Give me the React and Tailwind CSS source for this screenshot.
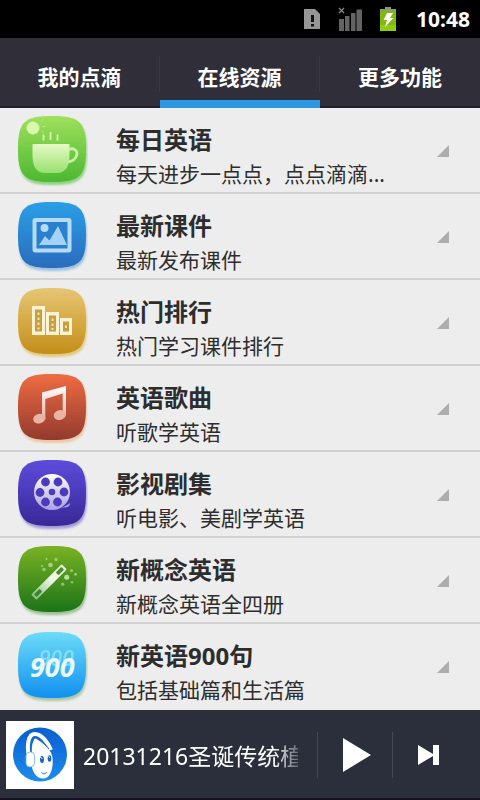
import { useState } from 'react';

const TABS = ['我的点滴', '在线资源', '更多功能'];

const SQUIRCLE =
  'M34 0 C62 0 68 6 68 33 C68 60 62 66 34 66 C6 66 0 60 0 33 C0 6 6 0 34 0 Z';

const IconTile = ({ id, from, to, shadow, children }) => (
  <svg viewBox="0 0 70 72" className="w-[70px] h-[72px] shrink-0" aria-hidden="true">
    <defs>
      <linearGradient id={`${id}-bg`} x1="0" y1="0" x2="0" y2="1">
        <stop offset="0" stopColor={from} />
        <stop offset="1" stopColor={to} />
      </linearGradient>
      <filter id={`${id}-blur`} x="-20%" y="-20%" width="140%" height="140%">
        <feGaussianBlur stdDeviation="1.2" />
      </filter>
    </defs>
    <path d={SQUIRCLE} fill={shadow} opacity="0.7" transform="translate(1 3)" filter={`url(#${id}-blur)`} />
    <path d={SQUIRCLE} fill={`url(#${id}-bg)`} />
    {children}
  </svg>
);

const CupIcon = () => (
  <IconTile id="cup" from="#a0e05c" to="#4cb832" shadow="#6cc455">
    <defs>
      <linearGradient id="cup-body" x1="0" y1="0" x2="0" y2="1">
        <stop offset="0" stopColor="#e6fbc4" />
        <stop offset="1" stopColor="#98e070" />
      </linearGradient>
    </defs>
    <path d="M15 3V1M23 6l2-3M24 11l4-1M23 15l3 2" stroke="#c6f08c" strokeWidth="1" opacity="0.6" />
    <circle cx="15" cy="12" r="6.5" fill="#d8f8b0" />
    <path d="M25.5 18.5v6M32.5 16v8M39.5 18.5v6" stroke="#dcf9b8" strokeWidth="1.8" />
    <path d="M50 34 C55 31 59 34 59 38 C58 43 54 46 48 46" fill="none" stroke="#c8f3a0" strokeWidth="2.8" />
    <path d="M14.5 28h37v12c0 11-5 17-12 17h-13c-7 0-12-6-12-17z" fill="url(#cup-body)" />
  </IconTile>
);

const PictureIcon = () => (
  <IconTile id="pic" from="#2a9fe6" to="#2a6cbe" shadow="#7fb0d8">
    <rect x="16.5" y="18" width="35" height="30.5" rx="1" fill="#2a80cc" stroke="#b4dcfa" strokeWidth="4" />
    <circle cx="26.5" cy="26" r="4" fill="#b4dcfa" />
    <path d="M21 43 L27 34 L31.5 38.5 L40 24 L49 43 Z" fill="#a4d2f8" />
  </IconTile>
);

const RankIcon = () => (
  <IconTile id="rank" from="#e6c674" to="#c48e18" shadow="#e0b850">
    <g fill="#fdf3d2">
      <rect x="14" y="18" width="13" height="29" />
      <rect x="28" y="24" width="13" height="23" />
      <rect x="42" y="30" width="12" height="17" />
    </g>
    <g fill="#c6a040">
      <rect x="17" y="21.5" width="7" height="22" />
      <rect x="31" y="27.5" width="7" height="16" />
      <rect x="45" y="33.5" width="6" height="10" />
    </g>
    <g fill="#f4e2b0">
      <rect x="19.5" y="24.5" width="2" height="2.5" />
      <rect x="19.5" y="29.5" width="2" height="2.5" />
      <rect x="19.5" y="34.5" width="2" height="2.5" />
      <rect x="19.5" y="39.5" width="2" height="2" />
      <rect x="33.5" y="30.5" width="2" height="2.5" />
      <rect x="33.5" y="35.5" width="2" height="2.5" />
      <rect x="33.5" y="40" width="2" height="2" />
      <rect x="47" y="37.5" width="2" height="2.5" />
    </g>
  </IconTile>
);

const MusicIcon = () => (
  <IconTile id="music" from="#f06c42" to="#923a2e" shadow="#e8b888">
    <defs>
      <linearGradient id="music-note" gradientUnits="userSpaceOnUse" x1="0" y1="12" x2="0" y2="50">
        <stop offset="0" stopColor="#fff" />
        <stop offset="1" stopColor="#e4a496" />
      </linearGradient>
    </defs>
    <path d="M24 18.5 L48 12 V41 H44.7 V19.5 L27.3 25 V45 H24 Z" fill="url(#music-note)" />
    <ellipse cx="21.3" cy="44.7" rx="6.2" ry="4.8" transform="rotate(-15 21.3 44.7)" fill="#e9b3a6" />
    <ellipse cx="41.8" cy="41" rx="6.2" ry="4.8" transform="rotate(-15 41.8 41)" fill="#e9b3a6" />
  </IconTile>
);

const REEL_HOLES = [[27.5, 22], [40, 22], [22, 32.5], [46, 32], [27.5, 42], [39.5, 42]];

const ReelIcon = () => (
  <IconTile id="reel" from="#5c4cdc" to="#382896" shadow="#8878d0">
    <defs>
      <linearGradient id="reel-disc" x1="0" y1="0" x2="0" y2="1">
        <stop offset="0" stopColor="#fff" />
        <stop offset="1" stopColor="#aaa0e4" />
      </linearGradient>
    </defs>
    <path d="M36 50 C43 49 48 46 52 43 C52 46 50 47.5 46 47.5 Z" fill="#aea4e6" />
    <circle cx="34" cy="32" r="18" fill="url(#reel-disc)" />
    {REEL_HOLES.map(([x, y]) => (
      <circle key={`${x}-${y}`} cx={x} cy={y} r="4.4" fill="#4a3abc" />
    ))}
    <circle cx="34" cy="32" r="3.3" fill="#4a3abc" />
  </IconTile>
);

const SPARKS = [
  [32.5, 19, 2.3, 0.6], [26, 23.5, 1.8, 0.5], [24, 20, 1.3, 0.4], [38, 13.5, 1.7, 0.5],
  [28.5, 13, 1, 0.6], [48.7, 31.3, 2.5, 0.8], [53.5, 24.5, 1.6, 0.5], [57.5, 28.3, 1.4, 0.6],
  [44.7, 38.3, 1.7, 0.5], [54, 36.3, 1.3, 0.5],
];

const WandIcon = () => (
  <IconTile id="wand" from="#7ab224" to="#1c7418" shadow="#7cb070">
    <defs>
      <linearGradient id="wand-stick" x1="0" y1="0" x2="1" y2="0">
        <stop offset="0" stopColor="#8cc08a" />
        <stop offset="0.6" stopColor="#f0f8e8" />
        <stop offset="1" stopColor="#e8f4dc" />
      </linearGradient>
    </defs>
    <g transform="translate(31 36) rotate(-45)">
      <rect x="-21.5" y="-3.6" width="43" height="7.2" rx="0.8" fill="url(#wand-stick)" />
      <rect x="-19.5" y="-2" width="8" height="4" rx="1" fill="#3a8a28" />
      <rect x="11.5" y="-2" width="8" height="4" rx="1" fill="#4a8c2c" />
    </g>
    {SPARKS.map(([x, y, r, o]) => (
      <circle key={`${x}-${y}`} cx={x} cy={y} r={r} fill="#d8f4c0" opacity={o} />
    ))}
  </IconTile>
);

const NineHundredIcon = () => (
  <IconTile id="nine" from="#6cdcf8" to="#1090f0" shadow="#88b888">
    <text x="21" y="34" fontSize="21" fontWeight="600" fontStyle="italic" fill="#a4ecfc" opacity="0.65" fontFamily="'Open Sans', sans-serif">
      900
    </text>
    <text x="12" y="45" fontSize="27" fontWeight="700" fontStyle="italic" fill="#eafaff" fontFamily="'Open Sans', sans-serif">
      900
    </text>
  </IconTile>
);

const CHANNELS = [
  { title: '每日英语', desc: '每天进步一点点，点点滴滴...', Icon: CupIcon },
  { title: '最新课件', desc: '最新发布课件', Icon: PictureIcon },
  { title: '热门排行', desc: '热门学习课件排行', Icon: RankIcon },
  { title: '英语歌曲', desc: '听歌学英语', Icon: MusicIcon },
  { title: '影视剧集', desc: '听电影、美剧学英语', Icon: ReelIcon },
  { title: '新概念英语', desc: '新概念英语全四册', Icon: WandIcon },
  { title: '新英语900句', desc: '包括基础篇和生活篇', Icon: NineHundredIcon },
];

const StatusBar = () => (
  <div className="flex h-[38px] items-center justify-end bg-black pr-[10px] text-white">
    <svg viewBox="0 0 16 20" className="mr-[18px] h-5 w-4" aria-hidden="true">
      <path d="M0 0h11l5 5v15H0z" fill="#969696" />
      <path d="M7 6h3v7H7zM7 15h3v2.5H7z" fill="#111" />
    </svg>
    <svg viewBox="0 0 24 24" className="mr-[17px] h-6 w-6" aria-hidden="true">
      <path d="M1 1l5 5M6 1l-5 5" stroke="#8a8a8a" strokeWidth="1.2" />
      <path d="M1 12h5v12H1zM7 9h4.5v15H7zM13 6h4.5v18H13zM18.5 2.5H24V24h-5.5z" fill="#636363" />
    </svg>
    <svg viewBox="0 0 18 24" className="mr-[19px] h-6 w-[18px]" aria-hidden="true">
      <path d="M6 0h6v2h5v6H1V2h5z" fill="#8a9a72" />
      <path d="M1 4h16v20H1z" fill="#80b80c" />
      <path d="M1 18h16v6H1z" fill="#8fcc10" />
      <path d="M8 6h6l-3 5h3.5L6 20l2-7H4.5z" fill="#fff" />
    </svg>
    <span className="text-[21px] leading-6 font-bold">10:48</span>
  </div>
);

const LogoIcon = () => (
  <svg viewBox="0 0 68 68" className="h-[68px] w-[68px] shrink-0 bg-white" role="img" aria-label="logo">
    <defs>
      <linearGradient id="logo-bg" x1="0" y1="0" x2="0" y2="1">
        <stop offset="0" stopColor="#0a5ed0" />
        <stop offset="1" stopColor="#1c8cec" />
      </linearGradient>
    </defs>
    <circle cx="34" cy="33.5" r="27" fill="url(#logo-bg)" />
    <path d="M29 17 C36 21 44 28 46 34 C48 42 46 57 38 57.5 C29 58 25 49 25 38 C25 29 26 21 29 17 Z" fill="#fff" />
    <path d="M22.5 34 C21 24 22 13 29 13 C36 13 42 22 45 29" fill="none" stroke="#fff" strokeWidth="4" />
    <path d="M25.5 32 C24.5 24 25.5 17 29.5 17 C34 17 39 23 43 28" fill="none" stroke="#1668d4" strokeWidth="1" />
    <rect x="20" y="31" width="8.5" height="15" rx="4" fill="#fff" stroke="#76acec" strokeWidth="0.8" />
    <ellipse cx="36" cy="38.5" rx="2" ry="3.5" fill="#1464cc" />
    <ellipse cx="43.5" cy="37.5" rx="1.8" ry="3.2" fill="#1464cc" />
    <path d="M34.5 36.5l2 1M42.5 35.5l1.5 1" stroke="#fff" strokeWidth="1" />
    <path d="M35.5 51.5c2 2 4 1.5 5.5-0.5" fill="none" stroke="#1464cc" strokeWidth="1" />
  </svg>
);

const PlayerBar = () => (
  <footer className="flex h-[90px] items-center border-b-2 border-[#14121e] bg-[#2b2e3b] pl-[6px] pt-[2px] text-white">
    <LogoIcon />
    <div className="ml-[9px] mr-[19px] min-w-0 flex-1 overflow-hidden whitespace-nowrap pt-[2px] text-[23px] leading-8 [mask-image:linear-gradient(to_right,black_190px,transparent_225px)]">
      20131216圣诞传统植
    </div>
    <button aria-label="播放" className="flex h-[46px] w-[75px] items-center justify-center border-l border-[#454855] pl-1">
      <svg viewBox="0 0 28 34" className="h-[34px] w-7" fill="currentColor">
        <path d="M0 0L28 17L0 34z" />
      </svg>
    </button>
    <button aria-label="下一首" className="flex h-[46px] w-[88px] items-center border-l border-[#454855] pl-[25px]">
      <svg viewBox="0 0 21 20" className="h-5 w-[21px]" fill="currentColor">
        <path d="M0 0L15 9V0h6v20h-6v-9L0 20z" />
      </svg>
    </button>
  </footer>
);

const App = () => {
  const [activeTab, setActiveTab] = useState(1);

  return (
    <div className="flex w-full flex-col bg-[#ededed] font-['Noto_Sans','Noto_Sans_CJK_SC',sans-serif]">
      <StatusBar />

      {/* Tabs */}
      <nav className="flex h-[70px] bg-[#2f2e39]">
        {TABS.map((tab, i) => (
          <button
            key={tab}
            onClick={() => setActiveTab(i)}
            className={`flex flex-1 flex-col justify-end text-[21px] font-bold text-white ${
              activeTab === i ? 'border-b-8 border-[#2b98e3]' : 'border-b-2 border-[#1f1e2a] pb-[6px]'
            }`}
          >
            <span
              className={`mb-2 flex h-9 w-full items-center justify-center pt-2 ${
                i < TABS.length - 1 ? 'border-r border-[#393843]' : ''
              }`}
            >
              {tab}
            </span>
          </button>
        ))}
      </nav>

      {/* Channel list */}
      <ul>
        {CHANNELS.map(({ title, desc, Icon }, i) => (
          <li key={title} className={i < CHANNELS.length - 1 ? 'border-b-2 border-[#d2d2d2]' : 'pb-[2px]'}>
            <button className="flex h-[84px] w-full items-center pl-[18px] pr-[31px] text-left text-[#2d2d2d]">
              <span className="pt-1">
                <Icon />
              </span>
              <span className="ml-[28px] flex min-w-0 flex-1 flex-col pt-[11px]">
                <span className="text-[24px] leading-9 font-bold">{title}</span>
                <span className="truncate text-[21px] leading-8">{desc}</span>
              </span>
              <svg viewBox="0 0 12 12" className="mt-[2px] h-3 w-3 shrink-0" aria-hidden="true">
                <path d="M12 0V12H0z" fill="#adadad" />
              </svg>
            </button>
          </li>
        ))}
      </ul>

      <PlayerBar />
    </div>
  );
};

export default App;
